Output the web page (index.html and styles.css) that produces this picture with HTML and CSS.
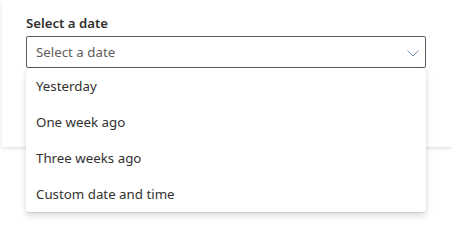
FILE: index.html
```html
<!DOCTYPE html>
<html>
<head>
<meta charset="utf-8">
<link rel="stylesheet" href="styles.css">
</head>
<body>
<div class="card">
  <div class="field">
    <label class="label">Select a date</label>
    <div class="dropdown">
      <span class="placeholder">Select a date</span>
      <svg class="caret" width="12" height="7" viewBox="0 0 12 7"><path d="M0.5 0.5 L6 6 L11.5 0.5" fill="none" stroke="#6f93ba" stroke-width="1"/></svg>
      <ul class="menu">
        <li class="item">Yesterday</li>
        <li class="item">One week ago</li>
        <li class="item">Three weeks ago</li>
        <li class="item">Custom date and time</li>
      </ul>
    </div>
  </div>
</div>
</body>
</html>
```
FILE: styles.css
```css
html, body {
  margin: 0;
  padding: 0;
  background: #ffffff;
}
body {
  font-family: "Noto Sans", "Open Sans", sans-serif;
  color: #323130;
  height: 242px;
}
.card {
  margin-left: 2px;
  height: 147px;
  box-sizing: border-box;
  padding: 13px 0 0 24px;
  background: #ffffff;
  box-shadow: 0 1.6px 3.6px rgba(0,0,0,0.13), 0 0.3px 0.9px rgba(0,0,0,0.11);
}
.field {
  width: 400px;
}
.label {
  display: block;
  font-size: 13.2px;
  font-weight: 600;
  line-height: 20px;
  padding-bottom: 3px;
  color: #323130;
}
.dropdown {
  position: relative;
  height: 32px;
  box-sizing: border-box;
  border: 1px solid #605e5c;
  border-radius: 2px;
  display: flex;
  align-items: center;
  padding: 0 6px 0 9px;
}
.placeholder {
  flex: 1;
  font-size: 13.3px;
  line-height: 20px;
  color: #605e5c;
}
.caret {
  margin-top: 2px;
}
.menu {
  position: absolute;
  top: 31px;
  left: -1px;
  width: 400px;
  margin: 0;
  padding: 0;
  list-style: none;
  background: #ffffff;
  border-radius: 2px;
  box-shadow: 0 3.2px 7.2px rgba(0,0,0,0.13), 0 0.6px 1.8px rgba(0,0,0,0.11);
}
.item {
  height: 36px;
  display: flex;
  align-items: center;
  padding: 0 10px;
  font-size: 13.3px;
  color: #323130;
}
```
